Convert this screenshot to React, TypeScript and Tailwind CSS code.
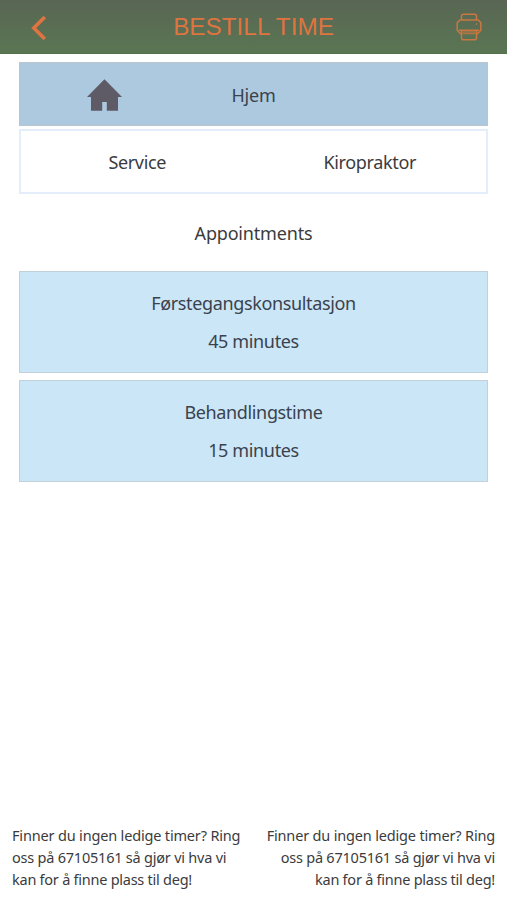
const appointments = [
  { name: "Førstegangskonsultasjon", duration: "45 minutes" },
  { name: "Behandlingstime", duration: "15 minutes" },
];

const notice = [
  { text: "Finner du ingen ledige timer? Ring", spacing: "tracking-[-0.17px]" },
  { text: "oss på 67105161 så gjør vi hva vi", spacing: "tracking-[-0.22px]" },
  { text: "kan for å finne plass til deg!", spacing: "tracking-[-0.25px]" },
];

function BackIcon() {
  return (
    <svg width="18" height="26" viewBox="0 0 18 26" fill="none" stroke="#df7440" strokeWidth="3.6">
      <path d="M14.8 2 3.8 13l11 11" />
    </svg>
  );
}

function PrinterIcon() {
  return (
    <svg width="26" height="28" viewBox="0 0 26 28" fill="none" stroke="#c87840" strokeWidth="1.5" strokeLinejoin="round">
      <path d="M5.5 7V3.2Q5.5 1.2 7.5 1.2h11q2 0 2 2V7" />
      <path d="M5.5 20.5H4.2L1.2 17.3V9.8L3.8 7h18.4l2.6 2.8v7.5l-3 3.2h-1.3" />
      <path d="M3 17.2h20M5.5 17.2v7.5q0 2.1 2 2.1h11q2 0 2-2.1v-7.5" />
      <path d="M6.2 19h13.6M6.2 20.7h13.6" strokeWidth="1.1" />
      <path d="M19.8 11h1.4" />
    </svg>
  );
}

function HomeIcon() {
  return (
    <svg width="35" height="32" viewBox="0 0 35 32" fill="#5e5a66">
      <path d="M17.5.3 35 18h-4v13.7H19.8V23h-4.6v8.7H4V18H0Z" />
    </svg>
  );
}

function Notice() {
  return (
    <p>
      {notice.map((line) => (
        <span key={line.text} className={`block whitespace-nowrap ${line.spacing}`}>
          {line.text}
        </span>
      ))}
    </p>
  );
}

export default function App() {
  return (
    <main className="flex h-[900px] w-full flex-col bg-white font-['Noto_Sans',sans-serif] text-lg tracking-[-0.36px] text-[#3b3b3d]">
      <header className="grid h-[54px] shrink-0 grid-cols-[80px_1fr_80px] items-center border-b border-[#507047] bg-linear-to-b from-[#596654] to-[#5a7653]">
        <button className="pt-0.5 pl-[30px]">
          <BackIcon />
        </button>
        <h1 className="pt-0.5 text-center font-['Liberation_Sans',sans-serif] text-[24.3px] leading-none tracking-normal text-[#df7440]">
          BESTILL TIME
        </h1>
        <button className="flex justify-end pr-[25px]">
          <PrinterIcon />
        </button>
      </header>

      <div className="flex flex-col px-[19px] pt-2">
        <div className="grid h-16 grid-cols-3 items-center border border-[#b9c5cb] bg-[#adc9df] text-center text-[#3a424d]">
          <div className="flex justify-center pt-px pl-3.5">
            <HomeIcon />
          </div>
          <span className="pt-px tracking-[-0.2px]">Hjem</span>
        </div>

        <div className="mt-[3px] grid h-[65px] grid-cols-2 items-center border-2 border-[#e3eefa] text-center">
          <span>Service</span>
          <span>Kiropraktor</span>
        </div>

        <h2 className="flex h-[77px] items-center justify-center tracking-[-0.18px]">Appointments</h2>

        <div className="flex flex-col gap-[7px]">
          {appointments.map((item) => (
            <div
              key={item.name}
              className="flex h-[102px] flex-col items-center justify-center border border-[#c2d0da] bg-[#cbe6f7] pb-px leading-[38px] text-[#3a424d]"
            >
              <span>{item.name}</span>
              <span>{item.duration}</span>
            </div>
          ))}
        </div>
      </div>

      <footer className="mt-auto flex justify-between px-3 pb-2.5 text-[14.5px] leading-[22px]">
        <Notice />
        <div className="text-right">
          <Notice />
        </div>
      </footer>
    </main>
  );
}
